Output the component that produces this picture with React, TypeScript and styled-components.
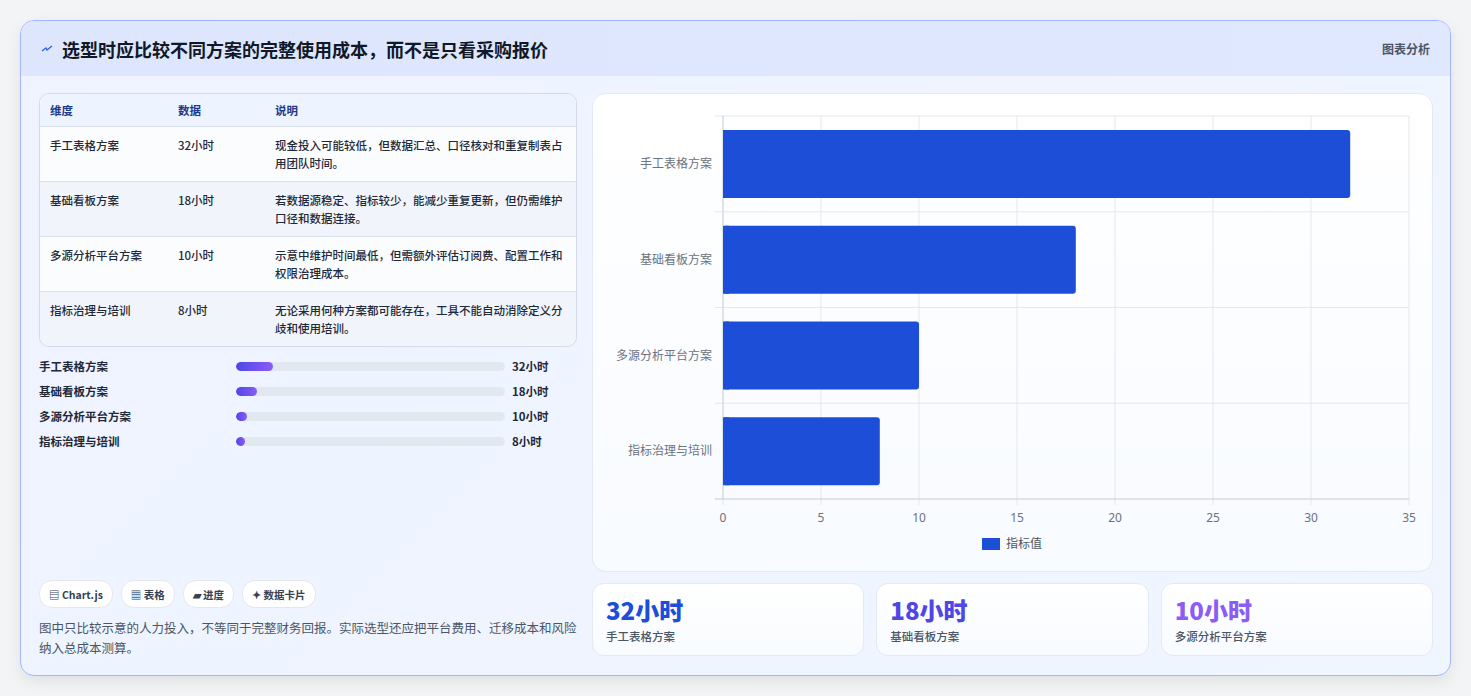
import React from "react";
import styled, { createGlobalStyle } from "styled-components";

const G = createGlobalStyle`
  body { margin:0; background:#f3f4f6; font-family:"Noto Sans CJK SC","Noto Sans",sans-serif; }
`;
const Page = styled.div`padding:20px 20px 20px 20px; height:696px; box-sizing:border-box;`;
const Card = styled.div`
  height:656px; box-sizing:border-box; border:1px solid #a5b4fc; border-radius:14px; overflow:hidden;
  background:linear-gradient(135deg,#eef3ff,#f0f6ff); box-shadow:0 6px 16px rgba(0,0,0,.08);
  display:flex; flex-direction:column;
`;
const Header = styled.div`
  height:55px; flex:none; display:flex; align-items:center; justify-content:space-between; padding:0 20px;
  background:linear-gradient(90deg,#dde6fd,#dfe8fe);
`;
const Title = styled.div`font-size:18px; font-weight:700; color:#111827; display:flex; align-items:center; gap:9px;`;
const Tag = styled.div`font-size:12px; color:#4b5563; font-weight:600;`;
const Body = styled.div`flex:1; display:grid; grid-template-columns:538px 1fr; gap:15px; padding:17px 18px 17px 18px;`;
const Left = styled.div`display:flex; flex-direction:column;`;
const Table = styled.div`border:1px solid #d1d9ea; border-radius:10px; overflow:hidden; background:#f8fafc;`;
const Row = styled.div<{ head?: boolean; alt?: boolean }>`
  display:grid; grid-template-columns:128px 97px 1fr; padding:${p => p.head ? "7px 10px" : "9px 10px"};
  font-size:11.5px; line-height:18px; color:${p => p.head ? "#1e3a8a" : "#1f2937"}; font-weight:${p => p.head ? 600 : 500};
  background:${p => p.head ? "#eef4ff" : p.alt ? "#f1f5fb" : "#fbfcfe"};
  border-top:${p => p.head ? "none" : "1px solid #d9e0ee"};
  min-height:${p => p.head ? "18px" : "35px"};
`;
const Bars = styled.div`display:flex; flex-direction:column; gap:7px; margin-top:10px;`;
const BarRow = styled.div`display:grid; grid-template-columns:197px 269px 1fr; gap:0; align-items:center; font-size:11.5px; font-weight:600; color:#1f2937; height:18px;`;
const Track = styled.div`height:9px; background:#e2e8f0; border-radius:5px; overflow:hidden;`;
const Fill = styled.div`height:100%; border-radius:5px; background:linear-gradient(90deg,#4f46e5,#8b5cf6);`;
const Val = styled.div`padding-left:7px;`;
const Chips = styled.div`margin-top:auto; display:flex; gap:8px;`;
const Chip = styled.div`height:26px; padding:0 9px; border-radius:13px; background:#fff; border:1px solid #e5e7eb; display:flex; align-items:center; gap:3px; font-size:10.5px; font-weight:600; color:#374151;`;
const Note = styled.div`margin-top:10px; font-size:12.5px; line-height:20px; color:#4b5563;`;
const Right = styled.div`display:flex; flex-direction:column; gap:11px;`;
const ChartBox = styled.div`height:479px; background:linear-gradient(180deg,#fff,#f8fbff); border:1px solid #e3e9f5; border-radius:14px; box-sizing:border-box; overflow:hidden;`;
const Stats = styled.div`display:grid; grid-template-columns:repeat(3,1fr); gap:12px;`;
const Stat = styled.div`height:73px; box-sizing:border-box; background:linear-gradient(180deg,#fff,#f8fbff); border:1px solid #e3e9f5; border-radius:12px; padding:10px 13px;`;
const StatVal = styled.div<{ c: string }>`font-size:24px; font-weight:800; color:${p => p.c}; line-height:32px;`;
const StatLbl = styled.div`font-size:11.5px; color:#4b5563; font-weight:500; margin-top:2px;`;

const rows = [
  ["手工表格方案", "32小时", "现金投入可能较低，但数据汇总、口径核对和重复制表占用团队时间。"],
  ["基础看板方案", "18小时", "若数据源稳定、指标较少，能减少重复更新，但仍需维护口径和数据连接。"],
  ["多源分析平台方案", "10小时", "示意中维护时间最低，但需额外评估订阅费、配置工作和权限治理成本。"],
  ["指标治理与培训", "8小时", "无论采用何种方案都可能存在，工具不能自动消除定义分歧和使用培训。"],
];
const vals = [32, 18, 10, 8];

function Chart() {
  const x0 = 130, w = 686, y0 = 22, h = 383, rh = h / 4;
  return (
    <svg width="839" height="479" viewBox="0 0 839 479">
      {Array.from({ length: 8 }).map((_, i) => (
        <g key={i}>
          <line x1={x0 + i * 98} x2={x0 + i * 98} y1={y0} y2={y0 + h + 6} stroke="#e5e7eb" />
          <text x={x0 + i * 98} y={428} fontSize="12" fill="#6b7280" textAnchor="middle" fontFamily="Noto Sans">{i * 5}</text>
        </g>
      ))}
      {[0, 1, 2, 3, 4].map(i => <line key={i} x1={x0 - 8} x2={x0 + w} y1={y0 + i * rh} y2={y0 + i * rh} stroke="#e5e7eb" />)}
      <line x1={x0 - 8} x2={x0 + w} y1={y0 + h} y2={y0 + h} stroke="#cbd5e1" />
      <line x1={x0} x2={x0} y1={y0} y2={y0 + h} stroke="#cbd5e1" />
      {vals.map((v, i) => (
        <g key={i}>
          <rect x={x0} y={y0 + i * rh + 14} width={v * 19.6} height={68} rx="3" fill="#1d4ed8" />
          <rect x={x0} y={y0 + i * rh + 14} width={6} height={68} fill="#1d4ed8" />
          <text x={119} y={y0 + i * rh + 52} fontSize="12" fill="#6b7280" textAnchor="end">{rows[i][0]}</text>
        </g>
      ))}
      <rect x={389} y={444} width={18} height={12} fill="#1d4ed8" />
      <text x={413} y={454} fontSize="12" fill="#4b5563">指标值</text>
    </svg>
  );
}

export default function App() {
  return (
    <Page>
      <G />
      <Card>
        <Header>
          <Title>
            <svg width="12" height="10" viewBox="0 0 12 10"><path d="M1 7 L5 4 L6 6 L11 2" stroke="#2563eb" strokeWidth="1.3" fill="none" /></svg>
            选型时应比较不同方案的完整使用成本，而不是只看采购报价
          </Title>
          <Tag>图表分析</Tag>
        </Header>
        <Body>
          <Left>
            <Table>
              <Row head><span>维度</span><span>数据</span><span>说明</span></Row>
              {rows.map((r, i) => <Row key={i} alt={i % 2 === 1}><span>{r[0]}</span><span>{r[1]}</span><span>{r[2]}</span></Row>)}
            </Table>
            <Bars>
              {rows.map((r, i) => (
                <BarRow key={i}>
                  <span>{r[0]}</span>
                  <Track><Fill style={{ width: `${Math.max(vals[i] / 235 * 100, 3.3)}%` }} /></Track>
                  <Val>{r[1]}</Val>
                </BarRow>
              ))}
            </Bars>
            <Chips>
              <Chip>▤ Chart.js</Chip><Chip>▦ 表格</Chip><Chip>▰ 进度</Chip><Chip>✦ 数据卡片</Chip>
            </Chips>
            <Note>图中只比较示意的人力投入，不等同于完整财务回报。实际选型还应把平台费用、迁移成本和风险纳入总成本测算。</Note>
          </Left>
          <Right>
            <ChartBox><Chart /></ChartBox>
            <Stats>
              <Stat><StatVal c="#1d4ed8">32小时</StatVal><StatLbl>手工表格方案</StatLbl></Stat>
              <Stat><StatVal c="#4f46e5">18小时</StatVal><StatLbl>基础看板方案</StatLbl></Stat>
              <Stat><StatVal c="#8b5cf6">10小时</StatVal><StatLbl>多源分析平台方案</StatLbl></Stat>
            </Stats>
          </Right>
        </Body>
      </Card>
    </Page>
  );
}
